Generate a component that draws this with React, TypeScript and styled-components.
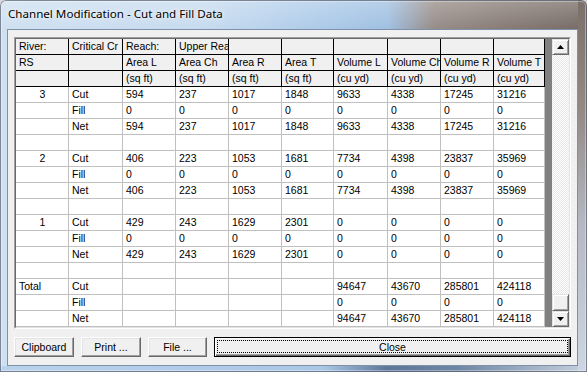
import React from 'react'
import styled, { createGlobalStyle } from 'styled-components'

const COLS = [53, 54, 53, 53, 53, 52, 54, 53, 53, 51]

const HEAD = [
  ['River:', 'Critical Cr', 'Reach:', 'Upper Reach', '', '', '', '', '', ''],
  ['RS', '', 'Area L', 'Area Ch', 'Area R', 'Area T', 'Volume L', 'Volume Ch', 'Volume R', 'Volume T'],
  ['', '', '(sq ft)', '(sq ft)', '(sq ft)', '(sq ft)', '(cu yd)', '(cu yd)', '(cu yd)', '(cu yd)'],
]

const zeros = ['0', '0', '0', '0', '0', '0', '0', '0']
const blank = ['', '', '', '', '', '', '', '', '', '']

const ROWS = [
  ['3', 'Cut', '594', '237', '1017', '1848', '9633', '4338', '17245', '31216'],
  ['', 'Fill', ...zeros],
  ['', 'Net', '594', '237', '1017', '1848', '9633', '4338', '17245', '31216'],
  blank,
  ['2', 'Cut', '406', '223', '1053', '1681', '7734', '4398', '23837', '35969'],
  ['', 'Fill', ...zeros],
  ['', 'Net', '406', '223', '1053', '1681', '7734', '4398', '23837', '35969'],
  blank,
  ['1', 'Cut', '429', '243', '1629', '2301', '0', '0', '0', '0'],
  ['', 'Fill', ...zeros],
  ['', 'Net', '429', '243', '1629', '2301', '0', '0', '0', '0'],
  blank,
  ['Total', 'Cut', '', '', '', '', '94647', '43670', '285801', '424118'],
  ['', 'Fill', '', '', '', '', '0', '0', '0', '0'],
  ['', 'Net', '', '', '', '', '94647', '43670', '285801', '424118'],
]

const GlobalStyle = createGlobalStyle`
  html, body {
    margin: 0;
    padding: 0;
    background: #d9d5dd;
  }
  body {
    font-family: "Liberation Sans", Arial, sans-serif;
  }
`

const Window = styled.div`
  width: 587px;
  height: 372px;
  box-sizing: border-box;
  display: flex;
  flex-direction: column;
  padding: 0 9px 6px 7px;
  border-radius: 6px 6px 0 0;
  box-shadow: inset 0 0 0 1px rgba(40, 50, 70, 0.55), inset 0 0 0 2px rgba(255, 255, 255, 0.35);
  background:
    linear-gradient(180deg, #7b6f69 0%, #948a86 30%, #b4b8c2 60%, #cdd6e2 100%) right top / 9px 100% no-repeat,
    linear-gradient(90deg, #b9d2ec 0%, #aac7e6 55%, #5d7799 66%, #6f87a6 78%, #c6d0dc 100%) left bottom / 100% 6px no-repeat,
    linear-gradient(180deg, rgba(255, 255, 255, 0.25) 0, rgba(255, 255, 255, 0) 29px),
    linear-gradient(90deg, #cfe0f1 0%, #c6dbef 35%, #abc9e8 56%, #a0c0e2 66%, #978c87 74%, #877b75 86%, #756a64 100%);
`

const TitleBar = styled.div`
  height: 29px;
  display: flex;
  align-items: center;
  padding: 0 0 2px 1px;
  box-sizing: border-box;
  font-family: "Segoe UI", "Noto Sans", sans-serif;
  font-size: 11.6px;
  color: #000;
  text-shadow: 0 0 6px rgba(255, 255, 255, 0.9), 0 0 3px rgba(255, 255, 255, 0.8);
`

const Client = styled.div`
  flex: 1;
  display: flex;
  flex-direction: column;
  gap: 8px;
  background: #f0f0f0;
  border: 1px solid #7f91a8;
  padding: 7px 6px 8px 6px;
`

const Sunken = styled.div`
  height: 292px;
  box-sizing: border-box;
  border: 1px solid;
  border-color: #a0a0a0 #ffffff #ffffff #a0a0a0;
`

const SunkenInner = styled.div`
  height: 100%;
  box-sizing: border-box;
  border: 1px solid;
  border-color: #696969 #e3e3e3 #e3e3e3 #696969;
  display: flex;
  background: #808080;
`

const Grid = styled.div`
  flex: 1;
  display: grid;
  grid-template-columns: ${COLS.map(w => `${w}px`).join(' ')};
  grid-auto-rows: 16px;
  align-content: start;
  font-size: 10.5px;
  color: #000;
`

const Cell = styled.div<{ $fixed?: boolean; $center?: boolean }>`
  box-sizing: border-box;
  height: 16px;
  padding: 0 2px 0 3px;
  line-height: 15px;
  white-space: nowrap;
  overflow: hidden;
  text-align: ${({ $center }) => ($center ? 'center' : 'left')};
  background: ${({ $fixed }) => ($fixed ? '#f0f0f0' : '#ffffff')};
  border-right: 1px solid ${({ $fixed }) => ($fixed ? '#000000' : '#c0c0c0')};
  border-bottom: 1px solid ${({ $fixed }) => ($fixed ? '#000000' : '#c0c0c0')};
`

const ScrollBar = styled.div`
  width: 17px;
  display: flex;
  flex-direction: column;
  background: conic-gradient(#ffffff 25%, #e6e6e6 0 50%, #ffffff 0 75%, #e6e6e6 0) 0 0 / 2px 2px;
`

const Raised = styled.div<{ $h: number }>`
  height: ${({ $h }) => $h}px;
  box-sizing: border-box;
  background: #f0f0f0;
  border: 1px solid;
  border-color: #e3e3e3 #696969 #696969 #e3e3e3;
  box-shadow: inset 1px 1px 0 #ffffff, inset -1px -1px 0 #a0a0a0;
  display: flex;
  align-items: center;
  justify-content: center;
`

const Track = styled.div`
  flex: 1;
  display: flex;
  flex-direction: column;
  justify-content: flex-end;
`

const ButtonRow = styled.div`
  display: flex;
  gap: 7px;
  height: 20px;
`

const Button = styled.div<{ $w?: number }>`
  width: ${({ $w }) => ($w ? `${$w}px` : 'auto')};
  flex: ${({ $w }) => ($w ? 'none' : '1')};
  box-sizing: border-box;
  background: #f0f0f0;
  border: 1px solid;
  border-color: #ffffff #696969 #696969 #ffffff;
  box-shadow: inset -1px -1px 0 #a0a0a0, inset 1px 1px 0 #e3e3e3;
  display: flex;
  align-items: center;
  justify-content: center;
  font-size: 10.5px;
  color: #000;
`

const DefaultButton = styled(Button)`
  border: 1px solid #000;
  box-shadow: inset 1px 1px 0 #ffffff, inset -1px -1px 0 #696969, inset -2px -2px 0 #a0a0a0;
  padding: 2px 2px 3px 2px;
`

const FocusRing = styled.div`
  flex: 1;
  align-self: stretch;
  border: 1px dotted #000;
  display: flex;
  align-items: center;
  justify-content: center;
`

const Arrow: React.FC<{ down?: boolean }> = ({ down }) => (
  <svg width="7" height="4" viewBox="0 0 7 4">
    <polygon points={down ? '0,0 7,0 3.5,4' : '3.5,0 7,4 0,4'} fill="#000" />
  </svg>
)

const App: React.FC = () => {
  return (
    <>
      <GlobalStyle />
      <Window>
        <TitleBar>Channel Modification - Cut and Fill Data</TitleBar>
        <Client>
          <Sunken>
            <SunkenInner>
              <Grid>
                {HEAD.map((row, i) =>
                  row.map((text, j) => (
                    <Cell key={`h${i}-${j}`} $fixed>
                      {text}
                    </Cell>
                  ))
                )}
                {ROWS.map((row, i) =>
                  row.map((text, j) => (
                    <Cell key={`r${i}-${j}`} $center={j === 0 && text !== 'Total'}>
                      {text}
                    </Cell>
                  ))
                )}
              </Grid>
              <ScrollBar>
                <Raised $h={16}>
                  <Arrow />
                </Raised>
                <Track>
                  <Raised $h={17} />
                </Track>
                <Raised $h={16}>
                  <Arrow down />
                </Raised>
              </ScrollBar>
            </SunkenInner>
          </Sunken>
          <ButtonRow>
            <Button $w={60}>Clipboard</Button>
            <Button $w={60}>Print ...</Button>
            <Button $w={59}>File ...</Button>
            <DefaultButton>
              <FocusRing>Close</FocusRing>
            </DefaultButton>
          </ButtonRow>
        </Client>
      </Window>
    </>
  )
}

export default App
